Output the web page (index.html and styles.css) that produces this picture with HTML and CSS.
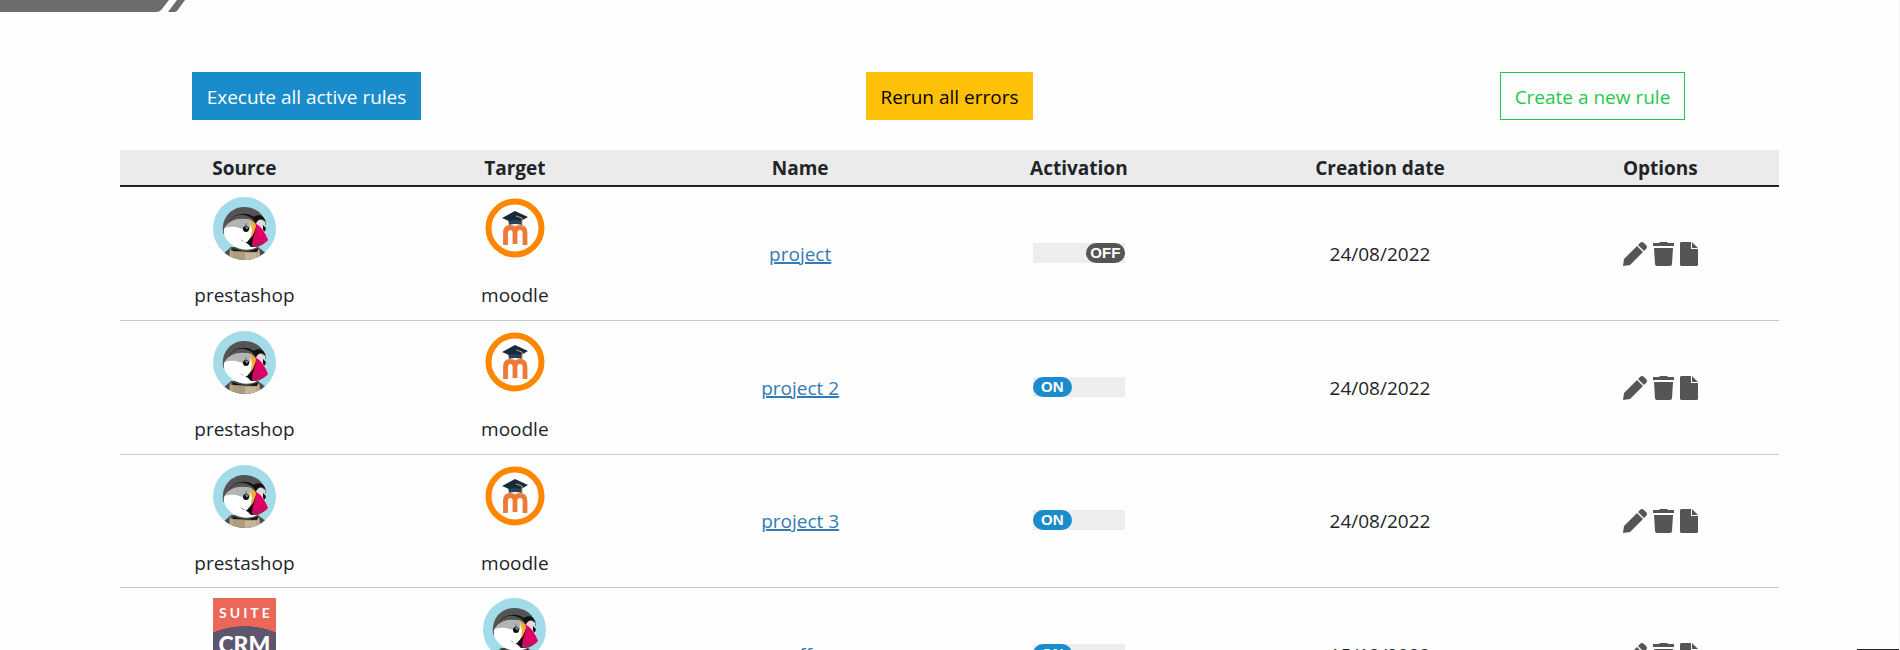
FILE: index.html
```html
<!DOCTYPE html>
<html lang="en">
<head>
<meta charset="utf-8">
<title>Rules</title>
<link rel="stylesheet" href="styles.css">
</head>
<body>
<svg class="defs" aria-hidden="true">
  <symbol id="puffin" viewBox="0 0 63 63">
    <clipPath id="disc"><circle cx="31.500" cy="31.500" r="31.500"/></clipPath>
    <g clip-path="url(#disc)">
      <rect width="63" height="63" fill="#a4dbe8"/>
      <path d="M9 63V58L18 50H45L54 57V63Z" fill="#4c4d4f"/>
      <path d="M10 36C8 20 19 10 31 10C43 10 51 17 53 27L48 40L18 45Z" fill="#535453"/>
      <path d="M11 32C16 23 26 20 38 23L44 30L46 23L52 25L53 35L48 46C44 54 28 55 19 48C13 43 10 38 11 32Z" fill="#fff"/>
      <path d="M12 31C16 23 27 20 38 23L37 32C29 35 26 27 12 31Z" fill="#b3b4b4"/>
      <path d="M16 26C19 19 26 17 31 18C37 19 41 22 43 27C45 22 49 20 53 25C51 17 43 17 41 20C34 14 19 16 16 26Z" fill="#111"/>
      <path d="M43 27C45 21 51 22 52 27V34L47 31Z" fill="#e3d9d8"/>
      <path d="M37 23L42 26L44 32L40 40L37 43L39 33Z" fill="#f9aa35"/>
      <circle cx="33" cy="32" r="3" fill="#111"/><path d="M33 25L34 31H32Z" fill="#555"/><circle cx="34" cy="31" r=".8" fill="#fff"/>
      <path d="M50 28L53 31L52 35L50 33Z" fill="#111"/>
      <path d="M27 42Q31 46 34 45L40 38L43 30L42 50H38L35 47Z" fill="#111"/>
      <path d="M43 27C48 29 53 37 55 43C51 48 43 51 39 49C39 41 43 36 43 27Z" fill="#df0067"/>
      <path d="M39 49C42 45 48 44 51 46C47 50 42 51 39 49Z" fill="#a81e58"/>
      <path d="M19 51C28 55 37 55 46 51L44 55H21Z" fill="#111"/>
      <path d="M18 54L45 55V63H18Z" fill="#ae9c7d"/><path d="M32 56H45V63H32Z" fill="#c5b698"/>
      <path d="M17 51L20 57V63H16ZM46 51L43 57V63H48Z" fill="#b9a98a"/>
    </g>
  </symbol>
  <symbol id="moodle" viewBox="0 0 63 63">
    <circle cx="32" cy="31" r="26.500" fill="#fff" stroke="#ff8700" stroke-width="6"/>
    <path d="M22.500 48V36Q22.500 30.500 27.500 30.500Q32 30.500 32 36V47M32 36Q32 30.500 37 30.500Q42 30.500 42 36V48" fill="none" stroke="#ee7a35" stroke-width="4.800"/>
    <path d="M25 22H39V28Q32 26 26 28Z" fill="#2c4256"/>
    <path d="M19 21L32 14L45 20L38 24Q31 22 26 24Z" fill="#172b3e"/>
    <path d="M33 19L39 21V30" fill="none" stroke="#c99b53"/>
  </symbol>
  <symbol id="pencil" viewBox="0 0 24 24"><path d="M0 24L1 17L14 4L20 10L7 23ZM15 3L17 1Q19-1 21 1L23 3Q25 5 23 7L21 9Z"/></symbol>
  <symbol id="trash" viewBox="0 0 21 24"><path d="M0 1H6L7 0H14L15 1H21V4H0ZM1 6H20L19 22Q19 24 17 24H4Q2 24 2 22Z"/></symbol>
  <symbol id="file" viewBox="0 0 18 24"><path d="M1 0H11V7H18V23L17 24H1L0 23V1ZM12 0L18 6H12Z"/></symbol>
</svg>

<header class="banner">
  <svg class="banner-shape" viewBox="0 0 185 12" aria-hidden="true"><path d="M0 0H169L162 9Q160 12 157 12H0ZM177 0H185L177 11L175 12H168Z"/></svg>
</header>

<main class="page">
  <div class="actions">
    <button class="btn btn-run">Execute all active rules</button>
    <button class="btn btn-rerun">Rerun all errors</button>
    <button class="btn btn-create">Create a new rule</button>
  </div>
  <div class="list">
  <table class="rules">
    <colgroup><col class="c-source"><col class="c-target"><col class="c-name"><col class="c-active"><col class="c-date"><col class="c-options"></colgroup>
    <thead>
      <tr><th>Source</th><th>Target</th><th>Name</th><th>Activation</th><th>Creation date</th><th>Options</th></tr>
    </thead>
    <tbody>
      <tr>
        <td class="solution"><svg class="logo"><use href="#puffin"/></svg><p class="app">prestashop</p></td>
        <td class="solution"><svg class="logo"><use href="#moodle"/></svg><p class="app">moodle</p></td>
        <td><a class="link" href="#">project</a></td>
        <td><label class="switch"><input class="switch-input" type="checkbox" aria-label="Activate project"><span class="knob off">OFF</span></label></td>
        <td>24/08/2022</td>
        <td><div class="options"><button class="icon" aria-label="Edit"><svg width="24" height="24"><use href="#pencil"/></svg></button><button class="icon" aria-label="Delete"><svg width="21" height="24"><use href="#trash"/></svg></button><button class="icon" aria-label="Details"><svg width="18" height="24"><use href="#file"/></svg></button></div></td>
      </tr>
      <tr>
        <td class="solution"><svg class="logo"><use href="#puffin"/></svg><p class="app">prestashop</p></td>
        <td class="solution"><svg class="logo"><use href="#moodle"/></svg><p class="app">moodle</p></td>
        <td><a class="link" href="#">project 2</a></td>
        <td><label class="switch"><input class="switch-input" type="checkbox" checked aria-label="Activate project 2"><span class="knob on">ON</span></label></td>
        <td>24/08/2022</td>
        <td><div class="options"><button class="icon" aria-label="Edit"><svg width="24" height="24"><use href="#pencil"/></svg></button><button class="icon" aria-label="Delete"><svg width="21" height="24"><use href="#trash"/></svg></button><button class="icon" aria-label="Details"><svg width="18" height="24"><use href="#file"/></svg></button></div></td>
      </tr>
      <tr>
        <td class="solution"><svg class="logo"><use href="#puffin"/></svg><p class="app">prestashop</p></td>
        <td class="solution"><svg class="logo"><use href="#moodle"/></svg><p class="app">moodle</p></td>
        <td><a class="link" href="#">project 3</a></td>
        <td><label class="switch"><input class="switch-input" type="checkbox" checked aria-label="Activate project 3"><span class="knob on">ON</span></label></td>
        <td>24/08/2022</td>
        <td><div class="options"><button class="icon" aria-label="Edit"><svg width="24" height="24"><use href="#pencil"/></svg></button><button class="icon" aria-label="Delete"><svg width="21" height="24"><use href="#trash"/></svg></button><button class="icon" aria-label="Details"><svg width="18" height="24"><use href="#file"/></svg></button></div></td>
      </tr>
      <tr>
        <td class="solution"><div class="logo suite"><span class="suite-top">SUITE</span><span class="suite-bottom">CRM</span></div><p class="app">suitecrm</p></td>
        <td class="solution"><svg class="logo"><use href="#puffin"/></svg><p class="app">prestashop</p></td>
        <td><a class="link" href="#">eff</a></td>
        <td><label class="switch"><input class="switch-input" type="checkbox" checked aria-label="Activate eff"><span class="knob on">ON</span></label></td>
        <td>15/12/2022</td>
        <td><div class="options"><button class="icon" aria-label="Edit"><svg width="24" height="24"><use href="#pencil"/></svg></button><button class="icon" aria-label="Delete"><svg width="21" height="24"><use href="#trash"/></svg></button><button class="icon" aria-label="Details"><svg width="18" height="24"><use href="#file"/></svg></button></div></td>
      </tr>
    </tbody>
  </table>
  </div>
</main>
<div class="corner"></div>
</body>
</html>
```
FILE: styles.css
```css
* { box-sizing: border-box; }
body {
  margin: 0;
  height: 100vh;
  overflow: hidden;
  border-right: 1px solid #f1f1f1;
  background: #fefefe;
  color: #212529;
  font: 19px/30px "Open Sans", "Noto Sans", sans-serif;
}
.defs { position: absolute; width: 0; height: 0; }
.banner { height: 12px; }
.banner-shape { display: block; width: 185px; height: 12px; fill: #6c6c6c; }
.page { padding-top: 60px; }
.actions {
  display: grid;
  grid-template-columns: repeat(3, 1fr);
  justify-items: center;
  margin: 0 -15px 30px;
}
.btn {
  height: 48px;
  padding: 1px 14px 0;
  border: 1px solid;
  font: inherit;
}
.btn-run { background: #1a8bcb; border-color: #1a8bcb; color: #fff; }
.btn-rerun { background: #ffc107; border-color: #ffc107; color: #000; }
.btn-create { background: transparent; border-color: #1fc84b; color: #1fc84b; }
.list { padding: 0 120px; }
.rules {
  width: 100%;
  table-layout: fixed;
  border-collapse: separate;
  border-spacing: 0;
  text-align: center;
}
.c-source { width: 15%; }
.c-target { width: 17.6%; }
.c-name { width: 16.8%; }
.c-active { width: 16.8%; }
.c-date { width: 19.5%; }
.c-options { width: 14.3%; }
th {
  height: 37px;
  padding: 0;
  background: #ebebeb;
  border-bottom: 2px solid #212529;
  font-weight: 700;
}
td {
  height: 134px;
  padding: 10px 0;
  border-bottom: 1px solid #c8c8c8;
}
tr:nth-child(3) td { height: 133px; }
.solution { padding: 10px 0 6px; vertical-align: top; }
.logo { display: block; width: 63px; height: 63px; margin: 0 auto; }
.app { margin: 20px 0 2px; }
.link { color: #337ab7; text-decoration-thickness: 2px; }
.switch {
  display: flex;
  width: 92px;
  height: 20px;
  margin: 0 auto 2px;
  background: #ededed;
}
.switch-input { position: absolute; opacity: 0; }
.knob {
  width: 39px;
  border-radius: 10px;
  color: #fff;
  font: 700 15px/20px "Liberation Sans", sans-serif;
}
.off { margin-left: auto; background: #555; }
.on { background: #1a8bcb; }
.options { display: flex; justify-content: center; gap: 6px; }
.icon {
  display: flex;
  padding: 0;
  border: 0;
  background: none;
  fill: #555;
}
.suite {
  overflow: hidden;
  background: radial-gradient(ellipse 58px 40px at 50% 68px, #5d566c 99%, #eb6757 100%);
  color: #fff;
  font-family: Lato, sans-serif;
}
.suite-top {
  display: block;
  padding: 6px 0 0 3px;
  font-size: 14px;
  font-weight: 700;
  line-height: 18px;
  letter-spacing: 3px;
}
.suite-bottom { display: block; margin-top: 10px; font-size: 23px; font-weight: 900; line-height: 24px; }
.corner {
  position: fixed;
  right: 1px;
  bottom: 0;
  width: 42px;
  height: 1px;
  background: #222;
}
```
